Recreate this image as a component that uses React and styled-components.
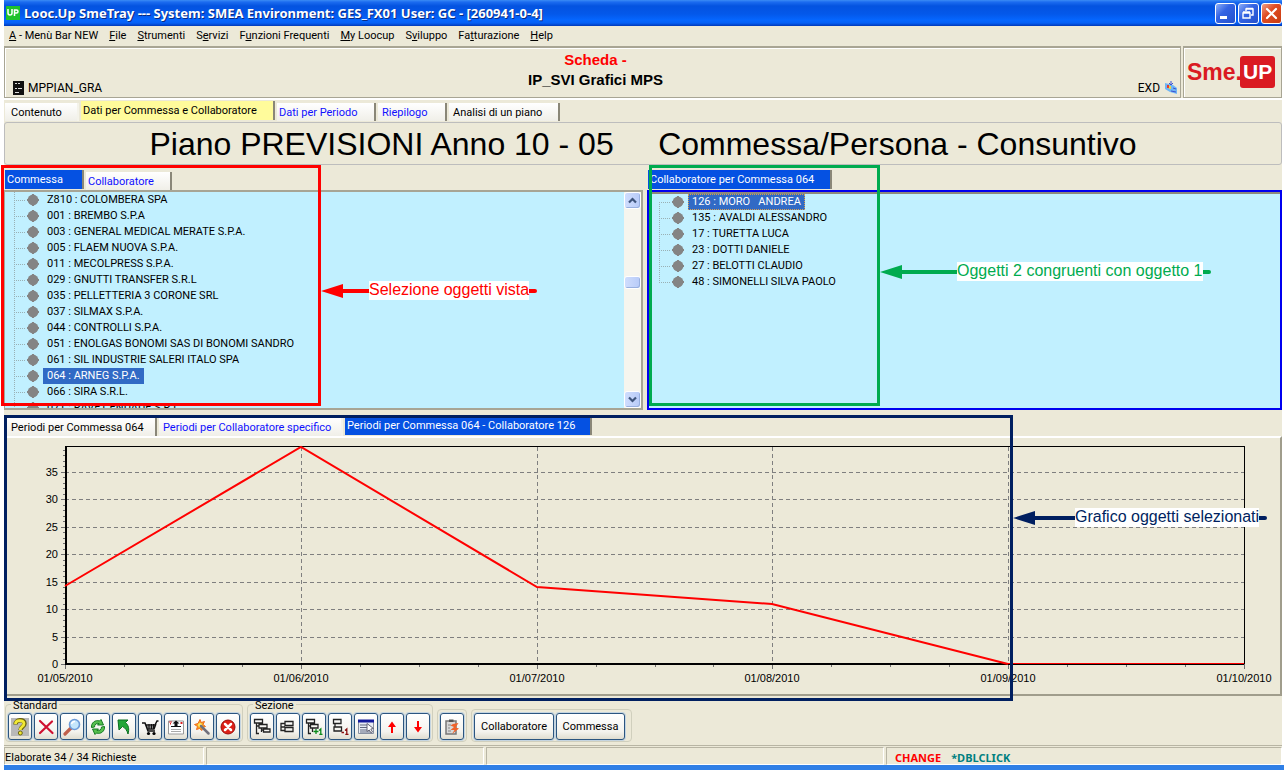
import React from "react";
import styled, { createGlobalStyle, css } from "styled-components";

const face = "#ece9d8";
const pool = "#c1f0ff";
const uiFont = 'Roboto, "Liberation Sans", sans-serif';
const arial = '"Liberation Sans", Arial, sans-serif';

const GlobalStyle = createGlobalStyle`
  *, *::before, *::after { box-sizing: border-box; }
  body { margin: 0; background: #fff; color: #000; font: 11px/16px ${uiFont}; }
  button { font: inherit; color: inherit; }
  ul { list-style: none; margin: 0; padding: 0; }
`;

const Window = styled.main`
  margin: 0 2px 0 4px;
  background: ${face};
`;

/* Title bar */

const TitleBar = styled.header`
  display: flex;
  align-items: center;
  height: 26px;
  padding: 0 0 0 2px;
  gap: 4px;
  background: linear-gradient(#3b8cf5 0, #1c6cf0 2px, #0453e0 6px, #0458ea 14px, #0566ff 20px, #0560f5 23px, #0038b8 26px);
`;

const WindowTitle = styled.h1`
  flex: 1;
  margin: 0;
  color: #fff;
  font: bold 13px/20px "Noto Sans", sans-serif;
  text-shadow: 1px 1px 0 #0a2a80;
  white-space: nowrap;
`;

const CaptionButtons = styled.div`
  display: flex;
  gap: 2px;
`;

const CaptionButton = styled.button`
  display: block;
  width: 21px;
  height: 21px;
  padding: 0;
  border: 1px solid #fff;
  border-radius: 3px;
  background: ${(p) => (p.$close ? "linear-gradient(135deg, #f0a088, #e04c24 40%, #c83c10)" : "linear-gradient(135deg, #8caef8, #3464e4 40%, #2450cc)")};
`;

const Svg = styled.svg`
  display: block;
  flex: none;
`;

/* Menu */

const MenuBar = styled.nav`
  display: flex;
  height: 20px;
  padding: 0 5px;
  gap: 11px;
  line-height: 19px;
`;

const MenuLink = styled.a`
  color: #000;
  text-decoration: none;
  white-space: nowrap;
`;

/* Header */

const HeaderRow = styled.section`
  display: flex;
  gap: 2px;
  height: 54px;
  border-bottom: 2px solid #fff;
`;

const HeaderPanel = styled.div`
  border: 1px solid #a8a594;
  border-top-width: 2px;
  box-shadow: inset 1px 1px 0 #fff;
`;

const HeaderMain = styled(HeaderPanel)`
  flex: 1;
  display: grid;
  grid-template-columns: 1fr auto 1fr;
  padding: 2px 2px 1px 8px;
`;

const HeaderCode = styled.div`
  display: flex;
  align-items: center;
  align-self: end;
  justify-self: ${(p) => (p.$end ? "end" : "start")};
  gap: 4px;
  font-size: 12px;
`;

const HeaderCaption = styled.div`
  text-align: center;
  font: bold 15px/20px ${arial};
`;

const HeaderKind = styled.div`
  color: #f00;
`;

const LogoPanel = styled(HeaderPanel)`
  display: flex;
  align-items: center;
  width: 99px;
  padding: 0 3px 2px;
`;

const LogoText = styled.span`
  color: #da1a22;
  font: bold 23px/28px ${arial};
`;

const LogoBadge = styled.span`
  padding: 0 3px;
  margin-left: -2px;
  border-radius: 3px;
  background: #da1a22;
  color: #fff;
  font: bold 21px/32px ${arial};
`;

/* Tabs */

const TabStrip = styled.div`
  display: flex;
  align-items: flex-end;
  gap: 2px;
  height: ${(p) => p.$height}px;
  padding: 0 1px;
`;

const activeTab = css`
  height: 19px;
  margin-bottom: 1px;
  padding-left: 2px;
  background: ${(p) => (p.$tone === "yellow" ? "#fffb9b" : "#0551e2")};
  color: ${(p) => (p.$tone === "yellow" ? "#000" : "#fff")};
`;

const Tab = styled.button`
  width: ${(p) => p.$width}px;
  height: 18px;
  padding: 0 0 0 ${(p) => p.$indent || 2}px;
  border: 0;
  border-right: 2px solid ${(p) => (p.$soft ? "#f4f3ea" : "#8a8778")};
  background: linear-gradient(#fff, #f0efe8);
  color: ${(p) => (p.$blue ? "#1010ff" : "#000")};
  line-height: 19px;
  text-align: left;
  white-space: nowrap;
  ${(p) => p.$tone && activeTab}
`;

const PlanTitle = styled.h2`
  height: 43px;
  margin: 1px 0 0;
  border: 1px solid #bdbdbd;
  border-radius: 3px;
  font: 32px/42px ${arial};
  text-align: center;
  white-space: pre;
`;

/* Trees */

const Split = styled.section`
  display: flex;
  gap: 4px;
`;

const Pane = styled.section`
  position: relative;
  flex: ${(p) => (p.$half ? "0 0 50%" : "1 1 0")};
  min-width: 0;
`;

const TreeFrame = styled.div`
  display: flex;
  height: 220px;
  background: ${pool};
  border: 2px solid ${(p) => (p.$focused ? "#0000f0" : "#a7a595")};
  border-left-width: ${(p) => (p.$focused ? 2 : 1)}px;
  ${(p) => p.$focused && "box-shadow: inset 0 2px 0 #8d8a7c;"}
`;

const Tree = styled.ul`
  flex: 1;
  overflow: hidden;
  padding: ${(p) => p.$inset || "0 0 0 9px"};
`;

const TreeItem = styled.li`
  display: flex;
  align-items: center;
  height: 16px;
  padding-left: 13px;
  line-height: 14px;
  background:
    repeating-linear-gradient(#9ab0b4 0 1px, transparent 1px 2px) 0 ${(p) => (p.$first ? 8 : 0)}px / 1px ${(p) => (p.$last ? 8 : 16)}px no-repeat,
    repeating-linear-gradient(90deg, #9ab0b4 0 1px, transparent 1px 2px) 0 8px / 12px 1px no-repeat;
`;

const Bullet = styled(Svg)`
  margin-right: 4px;
`;

const TreeLabel = styled.button`
  height: 16px;
  padding: 0 3px;
  border: 1px ${(p) => (p.$focus ? "dotted #d8a050" : "solid transparent")};
  background: ${(p) => (p.$selected ? "#316ac5" : "transparent")};
  color: ${(p) => (p.$selected ? "#fff" : "#000")};
  white-space: pre;
`;

const ScrollTrack = styled.div`
  display: flex;
  flex-direction: column;
  width: 17px;
  background: #f6f5ee;
`;

const ScrollButton = styled.button`
  display: flex;
  align-items: center;
  justify-content: center;
  height: ${(p) => p.$height}px;
  padding: 0;
  border: 1px solid #fff;
  border-radius: 3px;
  background: linear-gradient(90deg, #cfddfd, #b8cbf8);
  box-shadow: inset -1px -1px 0 #98b0e0;
`;

const ScrollGap = styled.div`
  flex: ${(p) => p.$grow};
`;

/* Call-outs drawn over the panes */

const Outline = styled.div`
  position: absolute;
  left: ${(p) => p.$left}px;
  top: ${(p) => p.$top}px;
  width: ${(p) => p.$width}px;
  height: ${(p) => p.$height}px;
  border: 3px solid ${(p) => p.$color};
  pointer-events: none;
  z-index: 1;
`;

const CalloutRow = styled.div`
  position: absolute;
  left: ${(p) => p.$left}px;
  top: ${(p) => p.$top}px;
  display: flex;
  align-items: center;
  color: ${(p) => p.$color};
  z-index: 1;
`;

const CalloutText = styled.span`
  height: 19px;
  background: #fff;
  font: 16px/18px ${arial};
  white-space: nowrap;
`;

const CalloutTail = styled.span`
  width: 8px;
  height: 4px;
  border-radius: 0 2px 2px 0;
  background: currentColor;
`;

/* Chart */

const ChartPanel = styled.div`
  border: 2px solid #a09d8c;
  border-top-color: #fff;
  border-left: 0;
  padding-bottom: 1px;
`;

const ChartSvg = styled.svg`
  display: block;
  width: 100%;
  font: 11px ${arial};
`;

/* Toolbar */

const Toolbar = styled.section`
  display: flex;
  align-items: flex-end;
  gap: 4px;
  height: 50px;
  padding: 0 1px 3px;
  border-bottom: 1px solid #b8b5a4;
`;

const Group = styled.fieldset`
  display: flex;
  gap: 2px;
  min-width: 0;
  margin: 0;
  padding: 3px ${(p) => p.$end || 2}px 1px 2px;
  border: 1px solid #d0cfbd;
  border-radius: 4px;
`;

const Legend = styled.legend`
  height: 12px;
  margin-left: 3px;
  padding: 0 2px;
  line-height: 16px;
`;

const ToolButton = styled.button`
  display: flex;
  align-items: center;
  justify-content: center;
  width: ${(p) => p.$width || 24}px;
  height: 27px;
  padding: 0;
  border: 1px solid #2b5580;
  border-radius: 3px;
  background: linear-gradient(#fff, #f4f3ee 70%, #e0ddd0);
  box-shadow: 0 0 0 1px #c4d4e0;
`;

/* Status bar */

const StatusBar = styled.footer`
  display: flex;
  gap: 2px;
  height: 18px;
  margin-top: 1px;
`;

const StatusCell = styled.div`
  flex: ${(p) => (p.$width ? `0 0 ${p.$width}px` : "1")};
  display: flex;
  gap: 10px;
  padding-left: ${(p) => p.$indent || 0}px;
  border-top: 1px solid #b8b5a4;
  border-left: 1px solid #b8b5a4;
  border-right: 1px solid #fff;
  border-bottom: 1px solid #fff;
  line-height: 19px;
`;

const StatusWord = styled.strong`
  color: ${(p) => p.$color};
  font-family: "Noto Sans", sans-serif;
`;

const Desktop = styled.div`
  height: 5px;
  margin-right: -2px;
  background: #2f7fe6;
`;

const menuItems = [
  ["", "A", " - Menù Bar NEW"],
  ["", "F", "ile"],
  ["", "S", "trumenti"],
  ["S", "e", "rvizi"],
  ["F", "u", "nzioni Frequenti"],
  ["", "M", "y Loocup"],
  ["S", "v", "iluppo"],
  ["Fa", "t", "turazione"],
  ["", "H", "elp"],
];

const orders = [
  "Z810 : COLOMBERA SPA",
  "001 : BREMBO S.P.A",
  "003 : GENERAL MEDICAL MERATE S.P.A.",
  "005 : FLAEM NUOVA S.P.A.",
  "011 : MECOLPRESS S.P.A.",
  "029 : GNUTTI TRANSFER S.R.L",
  "035 : PELLETTERIA 3 CORONE SRL",
  "037 : SILMAX S.P.A.",
  "044 : CONTROLLI S.P.A.",
  "051 : ENOLGAS BONOMI SAS DI BONOMI SANDRO",
  "061 : SIL INDUSTRIE SALERI ITALO SPA",
  "064 : ARNEG S.P.A.",
  "066 : SIRA S.R.L.",
  "071 : RAVET ENDADE S.R.L",
];

const people = [
  "126 : MORO   ANDREA",
  "135 : AVALDI ALESSANDRO",
  "17 : TURETTA LUCA",
  "23 : DOTTI DANIELE",
  "27 : BELOTTI CLAUDIO",
  "48 : SIMONELLI SILVA PAOLO",
];

function Node({ label, selected, focus, first, last }) {
  return (
    <TreeItem $first={first} $last={last}>
      <Bullet width="12" height="14" viewBox="0 0 12 14">
        <circle cx="6" cy="7" r="5.400" fill="#848484" />
        <path d="M5 1H7V13H5ZM0 6H12V8H0Z" fill="#848484" />
      </Bullet>
      <TreeLabel $selected={selected} $focus={focus}>{label}</TreeLabel>
    </TreeItem>
  );
}

function Chevron({ up }) {
  return (
    <Svg width="9" height="7" viewBox="0 0 9 7">
      <path d={up ? "M1 5.5 4.500 2 8 5.500" : "M1 1.500 4.500 5 8 1.500"} fill="none" stroke="#3f557d" strokeWidth="2.200" />
    </Svg>
  );
}

function Callout({ left, top, shaft, color, children }) {
  return (
    <CalloutRow $left={left} $top={top} $color={color}>
      <Svg width={shaft} height="14" viewBox={`0 0 ${shaft} 14`} fill="currentColor">
        <path d={`M0 7 22 0V5H${shaft}V9H22V14Z`} />
      </Svg>
      <CalloutText>{children}</CalloutText>
      <CalloutTail />
    </CalloutRow>
  );
}

const chart = { left: 61, right: 1240, top: 9, bottom: 226 };
const months = ["01/05/2010", "01/06/2010", "01/07/2010", "01/08/2010", "01/09/2010", "01/10/2010"];
const hours = [14.2, 39.500, 14, 10.900, 0, 0];
const xAt = (i) => Math.round(chart.left + (i * (chart.right - chart.left)) / 5);
const yAt = (v) => Math.round(chart.bottom - v * 5.490);

function Chart() {
  return (
    <ChartSvg viewBox="0 0 1276 255" role="img" aria-label="Periodi per Commessa 064 - Collaboratore 126">
      <g stroke="#7f7f7f" strokeDasharray="4 3" shapeRendering="crispEdges">
        {[5, 10, 15, 20, 25, 30, 35].map((v) => (
          <line key={v} x1={chart.left} x2={chart.right} y1={yAt(v) + 0.5} y2={yAt(v) + 0.5} />
        ))}
        {[1, 2, 3, 4].map((i) => (
          <line key={i} x1={xAt(i) + 0.5} x2={xAt(i) + 0.5} y1={chart.top} y2={chart.bottom} />
        ))}
      </g>
      <g stroke="#6f6f6f" shapeRendering="crispEdges">
        {Array.from({ length: 40 }, (_, v) => (
          <line key={v} x1={chart.left - (v % 5 ? 2 : 4)} x2={chart.left} y1={yAt(v) + 0.5} y2={yAt(v) + 0.5} />
        ))}
        {Array.from({ length: 21 }, (_, i) => (
          <line key={i} x1={xAt(i / 4) + 0.5} x2={xAt(i / 4) + 0.5} y1={chart.bottom} y2={chart.bottom + (i % 4 ? 3 : 5)} />
        ))}
      </g>
      <g fill="none" stroke="#000" strokeWidth="2" shapeRendering="crispEdges">
        <path d={`M${chart.left + 1} ${chart.top}V${chart.bottom}H${chart.right}`} />
        <path d={`M${chart.left} ${chart.top - 0.5}H${chart.right + 0.5}V${chart.bottom}`} strokeWidth="1" />
      </g>
      <polyline fill="none" stroke="#f00" strokeWidth="2" points={hours.slice(0, 5).map((v, i) => `${xAt(i)},${yAt(v)}`).join(" ")} />
      <rect x={xAt(4)} y={chart.bottom - 1} width={chart.right - xAt(4)} height="1" fill="#f00" />
      <rect x={xAt(4)} y={chart.bottom} width={chart.right - xAt(4)} height="1" fill="#000" />
      {[0, 5, 10, 15, 20, 25, 30, 35].map((v) => (
        <text key={v} x="54" y={yAt(v) + 4} textAnchor="end">{v}</text>
      ))}
      {months.map((m, i) => (
        <text key={m} x={xAt(i)} y="244" textAnchor="middle">{m}</text>
      ))}
    </ChartSvg>
  );
}

const icons = {
  help: (
    <>
      <rect width="18" height="18" fill="#b8b8b8" />
      <path d="M4.500 6.500C4.500 1 13.500 1 13.500 5.500 13.500 9 9.500 8.500 9.500 12" fill="none" stroke="#6b6410" strokeWidth="4.500" />
      <path d="M4.500 6C4.500 1.500 13 1.500 13 5.500 13 9 9.200 8.500 9.200 12" fill="none" stroke="#f2e935" strokeWidth="2.800" />
      <circle cx="9.300" cy="15" r="2" fill="#f2e935" stroke="#6b6410" />
    </>
  ),
  close: <path d="M3 3 15.500 15M15 3.500 3 15" fill="none" stroke="#cf1030" strokeWidth="2.200" strokeLinecap="round" />,
  search: (
    <>
      <path d="M2 16 8 10" stroke="#c0604c" strokeWidth="3.200" strokeLinecap="round" />
      <circle cx="11.500" cy="6.500" r="5" fill="#c4e6fb" stroke="#6c9bd8" strokeWidth="1.600" />
      <path d="M8.500 6C9 4 10.500 3.400 12 3.500" stroke="#fff" strokeWidth="1.500" fill="none" />
    </>
  ),
  refresh: (
    <>
      <path d="M2.500 9.500C2 5 6 1.500 10.500 3L12 1.500 14.500 7H8.500L10 5.500C7.500 4.800 5.500 6.500 5.500 9Z" fill="#57c04e" stroke="#137a22" />
      <path d="M15.500 8.500C16 13 12 16.500 7.500 15L6 16.500 3.500 11H9.500L8 12.500C10.500 13.200 12.500 11.500 12.500 9Z" fill="#57c04e" stroke="#137a22" />
    </>
  ),
  back: <path d="M3 2H13L10.500 4.500C13.500 7 14.500 11 13 16 12 12.500 10.500 10 7.500 8.500L4 12Z" fill="#21a637" stroke="#0b6e20" />,
  cart: (
    <>
      <path d="M1 5H4L7 13H14M5 7H14.500L13 11H6.500M14 7 16 3H17.500" fill="none" stroke="#111" strokeWidth="1.500" />
      <path d="M5.500 9H14M8 6V11M10.500 6V11M12.500 6V11" stroke="#111" />
      <circle cx="7.500" cy="15.500" r="1.600" />
      <circle cx="13" cy="15.500" r="1.600" />
    </>
  ),
  report: (
    <>
      <path d="M1.500 3H16.500V16H1.500Z" fill="#fff" stroke="#999" />
      <path d="M4 11.500H14M4 13.500H14" stroke="#aaa" />
      <path d="M9 2.500 12.500 5.500H10.500V8H7.500V5.500H5.500Z" fill="#111" />
      <path d="M4 8H14V9H4Z" fill="#111" />
      <path d="M2 3.500H5V4.500H2ZM3 5H4V6.500H3Z" fill="#d22" />
      <path d="M13.500 4H15.500V6H13.500Z" fill="#d22" />
    </>
  ),
  wand: (
    <>
      <path d="M7 1.500 8.200 4.500 11.500 3.500 10 6.500 12.500 8.500 9.500 9.500 9 12.500 6.500 10.500 3.500 11.500 4.500 8.500 1.500 6.500 5 5.500Z" fill="#f7a71c" stroke="#f0681e" />
      <circle cx="7" cy="7" r="2" fill="#ffe66b" />
      <path d="M8 8 15.500 15.500" stroke="#71717d" strokeWidth="2.500" strokeLinecap="round" />
    </>
  ),
  stop: (
    <>
      <circle cx="9" cy="9" r="7" fill="#dc1f16" stroke="#9c0c08" />
      <path d="M6 6 12 12M12 6 6 12" stroke="#fff" strokeWidth="2.500" strokeLinecap="round" />
    </>
  ),
  treeAll: <path d="M1.500 1.500H9.500V5H1.500ZM3.500 5V15.500H6M3.500 8H6M6 6.500H14V10H6ZM8.500 10V14M8.500 12H10.500V14H17V11H10.500V12" fill="none" stroke="#222" strokeWidth="1.300" />,
  treeOne: <path d="M6 3.500H14V7.500H6ZM6 5.500H2V12.500H6M6 9.500H14V13.500H6ZM2 9H6" fill="none" stroke="#222" strokeWidth="1.300" />,
  treePlus: (
    <>
      <path d="M1.500 1.500H9.500V5H1.500ZM3.500 5V15.500H6M3.500 8H6M5.500 6.500H13V10H5.500ZM7.500 10V14" fill="none" stroke="#222" strokeWidth="1.300" />
      <path d="M8.500 13.500H13.500M11 11V16M14 12.500 15.800 11V16.500M14.300 16.300H17.500" fill="none" stroke="#0a8a1a" strokeWidth="1.300" />
    </>
  ),
  treeMinus: (
    <>
      <path d="M2.500 1.500H10V5.500H2.500ZM4 5.500V9M3 9H10.500V13H3Z" fill="none" stroke="#222" strokeWidth="1.300" />
      <path d="M10.500 14.500H13M14 12.500 15.800 11V16.500M14.300 16.300H17.500" fill="none" stroke="#8b1010" strokeWidth="1.300" />
    </>
  ),
  list: (
    <>
      <path d="M1.500 2.500H16.500V15.500H1.500Z" fill="#e8ecf4" stroke="#8890a0" />
      <path d="M1 1.500H17V4.500H1Z" fill="#141a9c" />
      <path d="M3 7H11M3 9.500H10M3 12H11M3 14H13" stroke="#606880" />
      <path d="M10 5.500 16.500 10.500 13.800 11 15.500 14 14 15 12.300 12 10 13.500Z" fill="#fff" stroke="#667" />
    </>
  ),
  up: <path d="M9 3.500 13 9H10V15H8V9H5Z" fill="#f00" />,
  down: <path d="M9 14.500 13 9H10V3H8V9H5Z" fill="#f00" />,
  clip: (
    <>
      <path d="M3 3H13V16H3Z" fill="#d8d8d8" stroke="#777" strokeWidth="1.500" />
      <path d="M6 1.500H10.500V4H6Z" fill="#555" />
      <path d="M10 6 7.500 7.500 11 9 7.500 12 11.500 12 9 16 16 10.500 12.500 9.500 15.500 5Z" fill="#f0622a" />
      <path d="M5 7H8M5 10H7M5 13H8" stroke="#888" />
    </>
  ),
};

const standardTools = [
  ["Aiuto", "help"], ["Chiudi", "close"], ["Cerca", "search"], ["Aggiorna", "refresh"], ["Indietro", "back"],
  ["Carrello", "cart"], ["Scheda", "report"], ["Procedura", "wand"], ["Interrompi", "stop"],
];

const sectionTools = [
  ["Espandi tutto", "treeAll"], ["Comprimi", "treeOne"], ["Espandi un livello", "treePlus"],
  ["Comprimi un livello", "treeMinus"], ["Elenco", "list"], ["Su", "up"], ["Giù", "down"],
];

function Tools({ items }) {
  return items.map(([label, icon]) => (
    <ToolButton key={icon} aria-label={label}>
      <Svg width="18" height="18" viewBox="0 0 18 18">{icons[icon]}</Svg>
    </ToolButton>
  ));
}

export default function App() {
  return (
    <>
      <GlobalStyle />
      <Window>
        <TitleBar>
          <Svg width="14" height="14" viewBox="0 0 14 14">
            <rect width="14" height="14" fill="#1fc22b" />
            <path d="M2 3V7Q2 9 4 9T6 7V3M8.500 10V4H10.500Q12 4 12 5.500T10.500 7H8.500" fill="none" stroke="#fff" strokeWidth="1.500" />
          </Svg>
          <WindowTitle>Looc.Up SmeTray --- System: SMEA Environment: GES_FX01 User: GC - [260941-0-4]</WindowTitle>
          <CaptionButtons>
            <CaptionButton aria-label="Riduci a icona">
              <Svg width="19" height="19" viewBox="0 0 19 19"><path d="M4 12H11V15H4Z" fill="#fff" /></Svg>
            </CaptionButton>
            <CaptionButton aria-label="Ripristina">
              <Svg width="19" height="19" viewBox="0 0 19 19">
                <path d="M7 7V5H14V11H12M4 9H11V14H4ZM4 8H11M7 4.500H14" fill="none" stroke="#fff" strokeWidth="1.400" />
              </Svg>
            </CaptionButton>
            <CaptionButton $close aria-label="Chiudi finestra">
              <Svg width="19" height="19" viewBox="0 0 19 19"><path d="M5 5 14 14M14 5 5 14" stroke="#fff" strokeWidth="2.200" strokeLinecap="round" /></Svg>
            </CaptionButton>
          </CaptionButtons>
        </TitleBar>

        <MenuBar>
          {menuItems.map(([before, key, after]) => (
            <MenuLink href="#" key={before + key + after}>{before}<u>{key}</u>{after}</MenuLink>
          ))}
        </MenuBar>

        <HeaderRow>
          <HeaderMain>
            <HeaderCode>
              <Svg width="11" height="14" viewBox="0 0 11 14">
                <rect width="11" height="14" fill="#111" />
                <path d="M2 2.500H4M5 2.500H7M2 7.500H4M5 7.500H9M2 11.500H6" stroke="#ddd" />
              </Svg>
              MPPIAN_GRA
            </HeaderCode>
            <HeaderCaption>
              <HeaderKind>Scheda -</HeaderKind>
              IP_SVI Grafici MPS
            </HeaderCaption>
            <HeaderCode $end>
              EXD
              <Svg width="14" height="14" viewBox="0 0 14 14">
                <path d="M1 2 9 4 13 7V13L6 11 1 8Z" fill="#6fb5f5" />
                <path d="M7 0V4M5 2 7 4 9 2M9 7 12 8M7 10 12 11" stroke="#3c50d0" fill="none" />
                <path d="M3 4H5V7H3Z" fill="#e83a2c" />
                <path d="M5 5H7V8H5Z" fill="#f5d43c" />
              </Svg>
            </HeaderCode>
          </HeaderMain>
          <LogoPanel>
            <LogoText>Sme.</LogoText>
            <LogoBadge>UP</LogoBadge>
          </LogoPanel>
        </HeaderRow>

        <TabStrip $height={21}>
          <Tab $width={74} $indent={6} $soft>Contenuto</Tab>
          <Tab $width={194} $tone="yellow">Dati per Commessa e Collaboratore</Tab>
          <Tab $width={99} $blue>Dati per Periodo</Tab>
          <Tab $width={69} $indent={4} $blue>Riepilogo</Tab>
          <Tab $width={111} $indent={4}>Analisi di un piano</Tab>
        </TabStrip>

        <PlanTitle>{"Piano PREVISIONI Anno 10 - 05     Commessa/Persona - Consuntivo"}</PlanTitle>

        <Split>
          <Pane $half>
            <TabStrip $height={25}>
              <Tab $width={79} $tone="blue">Commessa</Tab>
              <Tab $width={86} $blue>Collaboratore</Tab>
            </TabStrip>
            <TreeFrame>
              <Tree>
                {orders.map((o) => <Node key={o} label={o} selected={o.startsWith("064")} />)}
              </Tree>
              <ScrollTrack>
                <ScrollButton $height={17} aria-label="Scorri su"><Chevron up /></ScrollButton>
                <ScrollGap $grow={67} />
                <ScrollButton $height={13} aria-label="Cursore" />
                <ScrollGap $grow={102} />
                <ScrollButton $height={17} aria-label="Scorri giù"><Chevron /></ScrollButton>
              </ScrollTrack>
            </TreeFrame>
            <Outline $left={-3} $top={0} $width={320} $height={241} $color="#f00" />
            <Callout left={317} top={116} shaft={48} color="#f00">Selezione oggetti vista</Callout>
          </Pane>

          <Pane>
            <TabStrip $height={25}>
              <Tab $width={184} $tone="blue">Collaboratore per Commessa 064</Tab>
            </TabStrip>
            <TreeFrame $focused>
              <Tree $inset="2px 0 0 10px">
                {people.map((p, i) => (
                  <Node key={p} label={p} selected={i === 0} focus={i === 0} first={i === 0} last={i === people.length - 1} />
                ))}
              </Tree>
            </TreeFrame>
            <Outline $left={2} $top={0} $width={231} $height={241} $color="#00ab4f" />
            <Callout left={233} top={97} shaft={77} color="#00ab4f">Oggetti 2 congruenti con oggetto 1</Callout>
          </Pane>
        </Split>

        <Pane>
          <TabStrip $height={26}>
            <Tab $width={152} $indent={6}>Periodi per Commessa 064</Tab>
            <Tab $width={184} $indent={4} $blue $soft>Periodi per Collaboratore specifico</Tab>
            <Tab $width={247} $tone="blue">Periodi per Commessa 064 - Collaboratore 126</Tab>
          </TabStrip>
          <ChartPanel>
            <Chart />
          </ChartPanel>
          <Outline $left={0} $top={5} $width={1009} $height={286} $color="#001f60" />
          <Callout left={1009} top={98} shaft={62} color="#001f60">Grafico oggetti selezionati</Callout>
        </Pane>

        <Toolbar>
          <Group><Legend>Standard</Legend><Tools items={standardTools} /></Group>
          <Group><Legend>Sezione</Legend><Tools items={sectionTools} /></Group>
          <Group><Tools items={[["Appunti", "clip"]]} /></Group>
          <Group $end={6}>
            <ToolButton $width={80}>Collaboratore</ToolButton>
            <ToolButton $width={69}>Commessa</ToolButton>
          </Group>
        </Toolbar>

        <StatusBar>
          <StatusCell $width={200}>Elaborate 34 / 34 Richieste</StatusCell>
          <StatusCell $width={278} />
          <StatusCell $width={398} />
          <StatusCell $indent={8}>
            <StatusWord $color="#f00">CHANGE</StatusWord>
            <StatusWord $color="#008080">*DBLCLICK</StatusWord>
          </StatusCell>
        </StatusBar>
        <Desktop />
      </Window>
    </>
  );
}
